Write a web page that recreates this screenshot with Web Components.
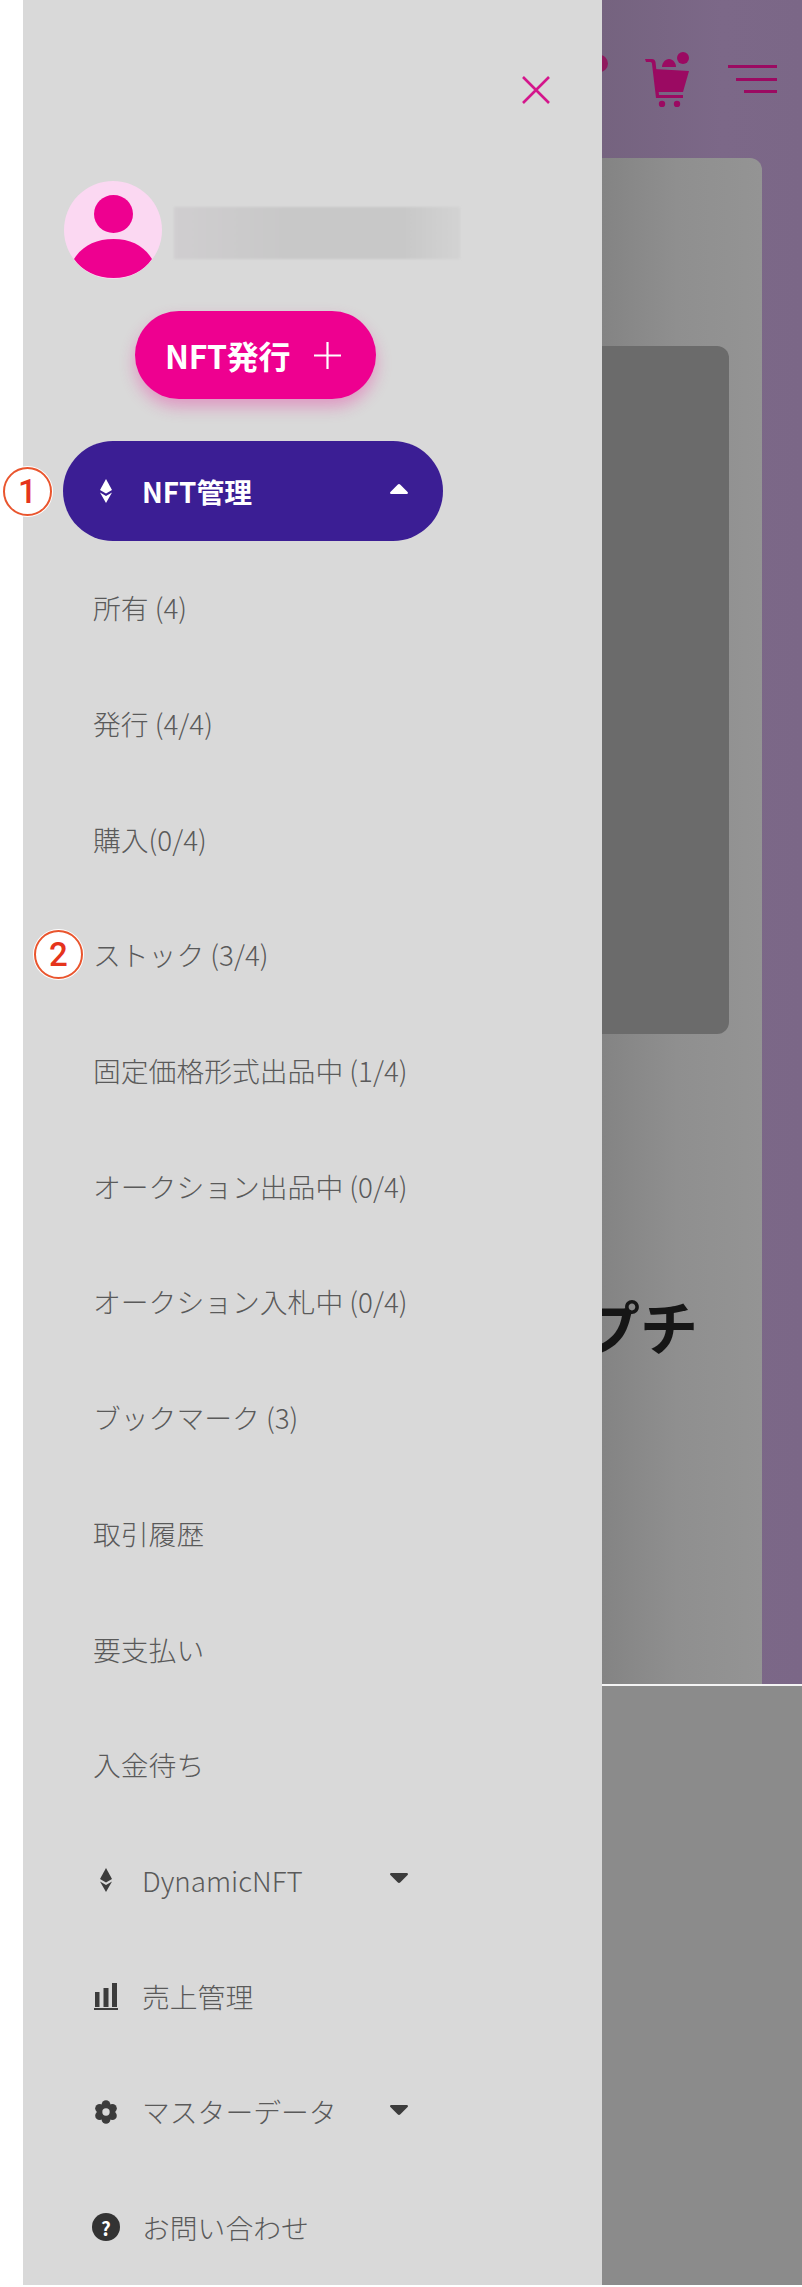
<!DOCTYPE html>
<html lang="ja">
<head>
<meta charset="utf-8">
<title>NFT管理</title>
<style>
  html, body { margin: 0; background: #fff; }
  body { font-family: "Noto Sans CJK JP", "Noto Sans", sans-serif; }
</style>
</head>
<body>
<app-screen>
  <nav-drawer>
    <user-badge></user-badge>
    <mint-button>NFT発行</mint-button>
    <nav-item icon="eth" caret="up" active step="1">NFT管理</nav-item>
    <nav-item sub>所有 (4)</nav-item>
    <nav-item sub>発行 (4/4)</nav-item>
    <nav-item sub>購入(0/4)</nav-item>
    <nav-item sub step="2">ストック (3/4)</nav-item>
    <nav-item sub>固定価格形式出品中 (1/4)</nav-item>
    <nav-item sub>オークション出品中 (0/4)</nav-item>
    <nav-item sub>オークション入札中 (0/4)</nav-item>
    <nav-item sub>ブックマーク (3)</nav-item>
    <nav-item sub>取引履歴</nav-item>
    <nav-item sub>要支払い</nav-item>
    <nav-item sub>入金待ち</nav-item>
    <nav-item icon="eth" caret="down">DynamicNFT</nav-item>
    <nav-item icon="bars">売上管理</nav-item>
    <nav-item icon="gear" caret="down">マスターデータ</nav-item>
    <nav-item icon="help">お問い合わせ</nav-item>
  </nav-drawer>
  <page-behind></page-behind>
</app-screen>

<script>
  const icons = {
    eth: `<svg width="12" height="24" viewBox="0 0 12 24" fill="currentColor"><path d="M6 0l6 11-6 3.500L0 11z"/><path d="M0 13.500L6 17l6-3.500L6 24z"/></svg>`,
    bars: `<svg width="24" height="27" viewBox="0 0 24 27" fill="currentColor"><rect x="1" y="9" width="4.500" height="15"/><rect x="9.500" y="5" width="5" height="19"/><rect x="18" y="0" width="5" height="24"/><rect x="0" y="25" width="24" height="2"/></svg>`,
    gear: `<svg width="26" height="26" viewBox="0 0 24 24" fill="currentColor"><circle cx="12" cy="4.600" r="4.400"/><circle cx="12" cy="19.400" r="4.400"/><circle cx="5.600" cy="8.300" r="4.400"/><circle cx="18.400" cy="8.300" r="4.400"/><circle cx="5.600" cy="15.700" r="4.400"/><circle cx="18.400" cy="15.700" r="4.400"/><circle cx="12" cy="12" r="7"/><circle cx="12" cy="12" r="3.700" fill="#d9d9d9"/></svg>`,
  };
  const carets = {
    up: `<svg width="18" height="10" viewBox="0 0 18 10" fill="currentColor"><path d="M7.600.7a2 2 0 0 1 2.800 0l7.200 7.200c.7.7.3 2.100-.8 2.100H1.200C.1 10-.3 8.600.4 7.900z"/></svg>`,
    down: `<svg width="18" height="10" viewBox="0 0 18 10" fill="currentColor"><path d="M7.600 9.300a2 2 0 0 0 2.800 0l7.200-7.200C18.300 1.400 17.900 0 16.800 0H1.200C.1 0-.3 1.400.4 2.100z"/></svg>`,
  };

  customElements.define('app-screen', class extends HTMLElement {
    constructor() {
      super();
      this.attachShadow({mode: 'open'}).innerHTML = `
        <style>
          :host { display: flex; width: 779px; height: 2285px; margin-left: 23px; }
        </style>
        <slot></slot>`;
    }
  });

  customElements.define('nav-drawer', class extends HTMLElement {
    constructor() {
      super();
      this.attachShadow({mode: 'open'}).innerHTML = `
        <style>
          :host { display: block; flex: none; width: 579px; height: 2285px; background: #d9d9d9; color: #3c3c3c; }
          .close { display: flex; justify-content: flex-end; height: 181px; padding: 76px 52px 0 0; box-sizing: border-box; }
        </style>
        <div class="close">
          <svg width="28" height="28" viewBox="0 0 28 28" fill="none" stroke="#d4168c" stroke-width="2.600"><path d="M1 1l26 26M27 1L1 27"/></svg>
        </div>
        <slot></slot>`;
    }
  });

  customElements.define('user-badge', class extends HTMLElement {
    constructor() {
      super();
      this.attachShadow({mode: 'open'}).innerHTML = `
        <style>
          :host { display: flex; align-items: center; gap: 12px; height: 98px; padding-left: 41px; }
          svg { flex: none; }
          .name { width: 286px; height: 52px; margin-top: 5px; background: linear-gradient(90deg, #d0ced0, #c8c8c8 40%, #c8c8c8 80%, #d3d3d3); filter: blur(1px); }
        </style>
        <svg width="98" height="98" viewBox="0 0 98 98">
          <defs><clipPath id="c"><circle cx="49" cy="49" r="49"/></clipPath></defs>
          <circle cx="49" cy="49" r="49" fill="#fbd8f2"/>
          <ellipse cx="49.500" cy="33" rx="19.500" ry="19" fill="#ee0090"/>
          <path d="M10 78c8-13 22-20 39.500-20S80 65 88 78C80 90 66 97 49.500 97S18 90 10 78z" fill="#ee0090" clip-path="url(#c)"/>
        </svg>
        <div class="name"></div>`;
    }
  });

  customElements.define('mint-button', class extends HTMLElement {
    constructor() {
      super();
      this.attachShadow({mode: 'open'}).innerHTML = `
        <style>
          :host { display: flex; align-items: center; justify-content: space-between; width: 241px; height: 88px; box-sizing: border-box; margin: 32px 0 42px 112px; padding: 0 35px 0 30px; border-radius: 44px; background: #ee0090; color: #fff; font-size: 32px; font-weight: 700; white-space: nowrap; box-shadow: 0 8px 16px rgba(238, 0, 144, .3); }
          span { letter-spacing: -0.3px; }
        </style>
        <span><slot></slot></span>
        <svg width="27" height="27" viewBox="0 0 27 27" stroke="#fff" stroke-width="2.200"><path d="M13.500 0v27M0 13.500h27"/></svg>`;
    }
  });

  customElements.define('nav-item', class extends HTMLElement {
    constructor() {
      super();
      const icon = this.getAttribute('icon');
      const caret = this.getAttribute('caret');
      const step = this.getAttribute('step');
      let glyph = icon ? icons[icon] : '';
      if (icon === 'help') glyph = `<span class="help">?</span>`;
      this.attachShadow({mode: 'open'}).innerHTML = `
        <style>
          :host { display: flex; align-items: center; position: relative; box-sizing: border-box; height: 115.7px; padding-left: 71px; color: #5a5a5a; font-size: 27.8px; font-weight: 300; white-space: nowrap; }
          :host([sub]) { padding-left: 70px; }
          :host([active]) { width: 380px; height: 100px; margin: 0 0 9px 40px; padding-left: 31px; border-radius: 50px; background: #3b1e94; color: #fff; font-weight: 700; }
          .box { flex: none; display: flex; justify-content: center; align-items: center; width: 24px; margin-right: 24px; color: #3c3c3c; }
          :host([active]) .box { color: #fff; }
          .text { margin-top: -1px; }
          .caret { position: absolute; left: 367px; top: 50%; margin-top: -7px; display: flex; color: #3c3c3c; }
          :host([active]) .caret { left: 327px; color: #fff; }
          .help { flex: none; display: flex; align-items: center; justify-content: center; width: 28px; height: 28px; border-radius: 50%; background: #333; color: #fff; font-size: 19px; font-weight: 700; line-height: 1; }
          .step { position: absolute; top: 50%; display: flex; align-items: center; justify-content: center; width: 45px; height: 45px; margin-top: -24.500px; border: 2px solid #e9552e; border-radius: 50%; background: #fff; color: #e5341c; font-family: Roboto, sans-serif; font-size: 33px; font-weight: 500; line-height: 1; box-shadow: 0 0 0 1px #fff; }
          :host([active]) .step { left: -60px; }
          :host([sub]) .step { left: 11px; }
        </style>
        ${step ? `<span class="step">${step}</span>` : ''}
        ${icon ? `<span class="box">${glyph}</span>` : ''}
        <span class="text"><slot></slot></span>
        ${caret ? `<span class="caret">${carets[caret]}</span>` : ''}`;
    }
  });

  customElements.define('page-behind', class extends HTMLElement {
    constructor() {
      super();
      this.attachShadow({mode: 'open'}).innerHTML = `
        <style>
          :host { display: flex; flex-direction: column; flex: none; width: 200px; height: 2285px; overflow: hidden; background: #8b8b8b; }
          .top { display: flex; flex-direction: column; height: 1684px; background: linear-gradient(90deg, #75637f, #7c6888 60%, #7b6787); }
          .bar { display: flex; align-items: flex-start; flex: none; height: 158px; color: #9b0a62; }
          .cut { flex: none; width: 17px; height: 17px; margin: 55px 0 0 -11px; border-radius: 50%; background: #8f1a5e; }
          .cart { margin: 52px 0 0 37px; }
          .lines { display: flex; flex-direction: column; align-items: flex-end; gap: 9.500px; width: 49px; margin: 65px 0 0 39px; }
          .lines i { display: block; height: 3px; background: currentColor; }
          .card { flex: 1; width: 190px; margin-left: -30px; border-radius: 12px 12px 0 0; background: linear-gradient(90deg, #7f7f7f, #8f8f8f 55%, #949494); overflow: hidden; }
          .shot { width: 157px; height: 688px; margin-top: 188px; border-radius: 12px; background: #6b6b6b; }
          h2 { margin: 251px 0 0 10px; color: #161616; font-size: 58px; line-height: 80px; font-weight: 700; white-space: nowrap; }
          .rule { flex: none; height: 2px; background: #f4f4f4; }
        </style>
        <div class="top">
          <div class="bar">
            <span class="cut"></span>
            <svg class="cart" width="44" height="55" viewBox="0 0 44 55" fill="currentColor">
              <path d="M0 7h7c2 0 3 1 3.500 3L14 43h24v3H11L7 12c0-1-.5-2-1.500-2H1z"/>
              <path d="M9 17l35 2-6 21H12z"/>
              <path d="M17 15c0-4 3-8 7-8s7 4 7 8z"/>
              <circle cx="38" cy="6" r="6"/>
              <circle cx="17" cy="52" r="3.200"/>
              <circle cx="32" cy="52" r="3.200"/>
            </svg>
            <div class="lines"><i style="width:49px"></i><i style="width:41px"></i><i style="width:33px"></i></div>
          </div>
          <div class="card">
            <div class="shot"></div>
            <h2>プチ</h2>
          </div>
        </div>
        <div class="rule"></div>`;
    }
  });
</script>
</body>
</html>
